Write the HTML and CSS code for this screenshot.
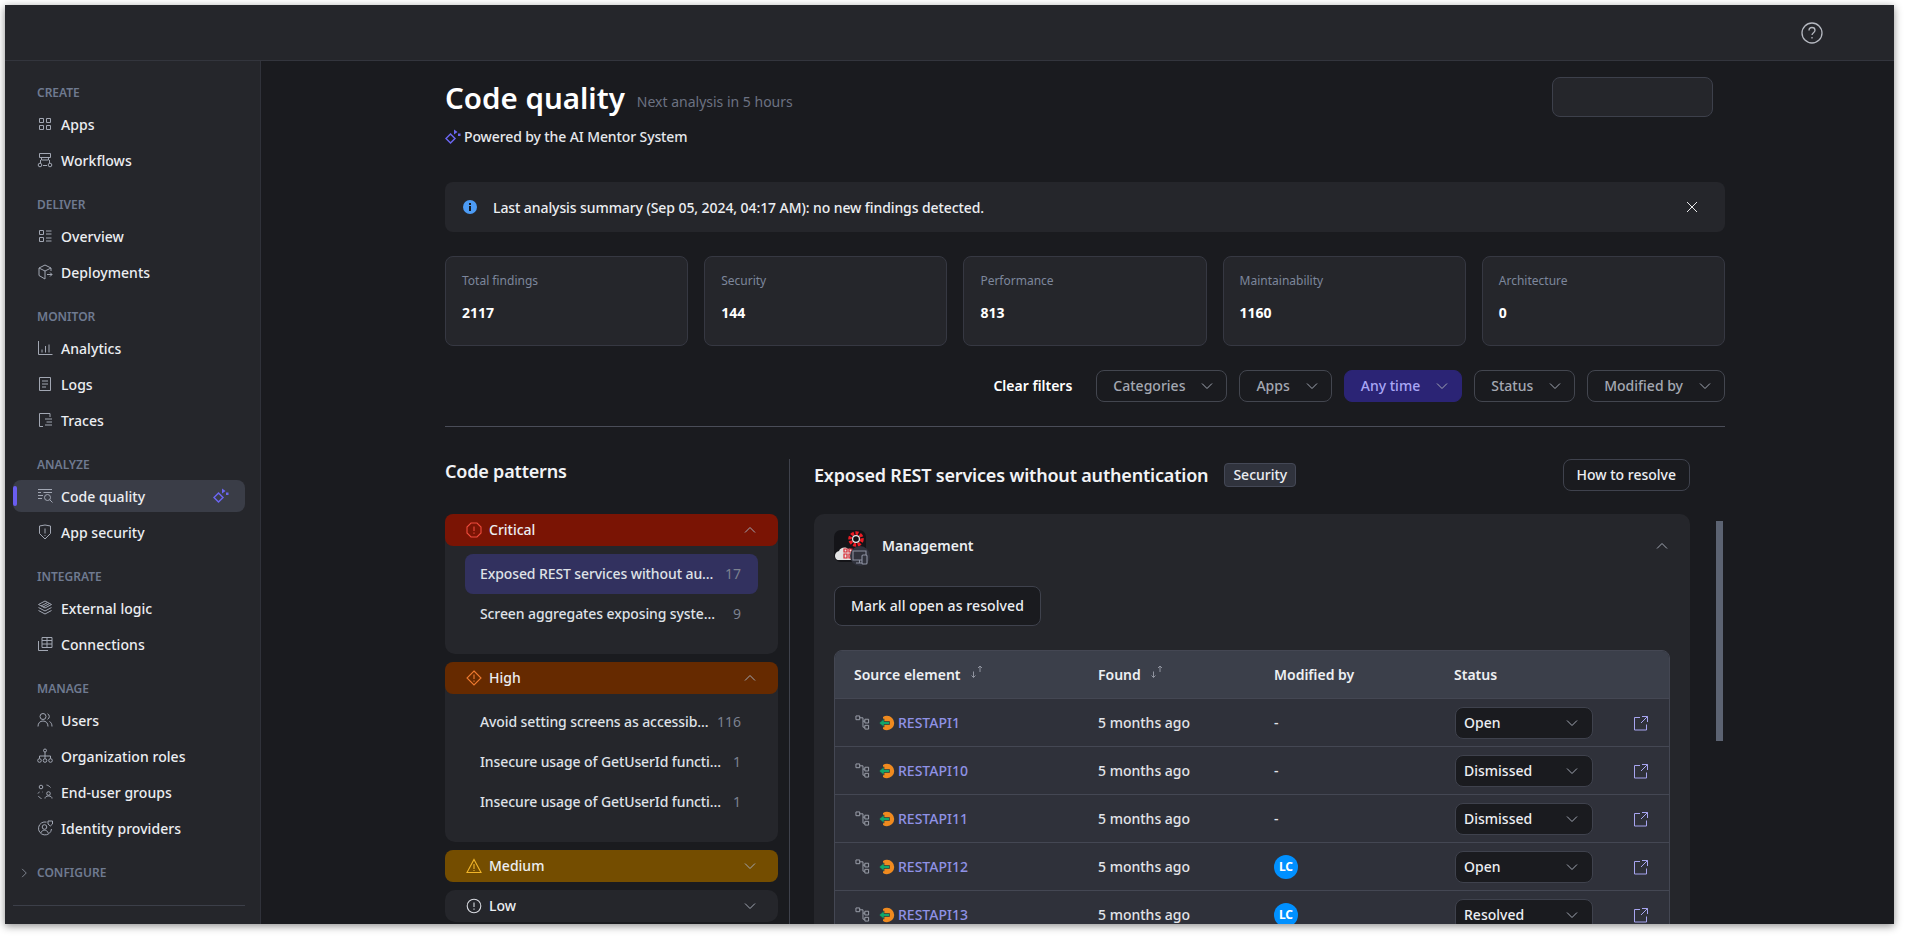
FILE: index.html
```html
<!DOCTYPE html>
<html lang="en">
<head>
  <meta charset="UTF-8" />
  <title>Code quality</title>
  <link rel="stylesheet" href="styles.css">
</head>
<body>
  <svg class="sprites" width="0" height="0">
    <symbol id="i-apps" viewBox="0 0 16 16"><path d="M2.5 2.5h4v4h-4zM9.5 2.5h4v4h-4zM2.5 9.5h4v4h-4zM9.5 9.5h4v4h-4z"/></symbol>
    <symbol id="i-flows" viewBox="0 0 16 16"><path d="M2.5 1.5h11v4h-11zM4.5 5.5V8h7V5.5M3.500 8v3M12.5 8v3M6 13.5h4"/><circle cx="3" cy="13" r="1.8"/><circle cx="13" cy="13" r="1.8"/></symbol>
    <symbol id="i-overview" viewBox="0 0 16 16"><path d="M2.5 2.5h4v4h-4zM2.5 9.5h4v4h-4zM9 3h5.5M9 6h5.5M9 10h5.5M9 13h5.5"/></symbol>
    <symbol id="i-deploy" viewBox="0 0 16 16"><path d="M8 1 2 4v7.5L8 15M8 1l6 3v3M2 4l6 3v8M8 7l6-3M10 10.5h5M13 8.5l2 2-2 2"/></symbol>
    <symbol id="i-analytics" viewBox="0 0 16 16"><path d="M1.5 1v13.5h14M5 9.5v3M8.5 6v6.5M12 4.5v8"/></symbol>
    <symbol id="i-logs" viewBox="0 0 16 16"><path d="M2.5 1.5h11v13h-11zM5 5h6M5 8h6M5 11h4"/></symbol>
    <symbol id="i-traces" viewBox="0 0 16 16"><path d="M13 5V1.5H2.5v13H6M8 7h7M9.5 10H15M8 13h7"/></symbol>
    <symbol id="i-quality" viewBox="0 0 16 16"><path d="M1 1.5h14M1 4.5h3M6.5 4.5H15M1 7.5h5M1 10.5h4"/><circle cx="10.5" cy="9.5" r="3"/><path d="m12.8 11.8 2.7 2.7"/></symbol>
    <symbol id="i-shield" viewBox="0 0 16 16"><path d="M2.5 2 8 1l5.500 1v7.5L8 15 2.5 9.500zM8 4.5v5M8 11v.8"/></symbol>
    <symbol id="i-layers" viewBox="0 0 16 16"><path d="M8 1 1.500 4.500 8 8l6.500-3.500zM1.500 7.500 8 11l6.500-3.500M1.500 10.500 8 14l6.500-3.500M4 6l6-3.200M6 7l6-3.200"/></symbol>
    <symbol id="i-conn" viewBox="0 0 16 16"><path d="M5 1.500h10v10H5zM5 4.500h10M5 8h10M10 1.500v10M1.500 5v9.500H11"/></symbol>
    <symbol id="i-users" viewBox="0 0 16 16"><circle cx="6" cy="4.5" r="3"/><path d="M1 14.500c0-3.500 2-5.500 5-5.500s5 2 5 5.500M10.500 1.800a3 3 0 0 1 0 5.500M12.500 9.500c1.500.8 2.500 2.500 2.500 5"/></symbol>
    <symbol id="i-org" viewBox="0 0 16 16"><circle cx="8" cy="2.5" r="1.5"/><path d="M8 4v4M2.500 10.500V8h11v2.500M8 8v2.500"/><circle cx="2.5" cy="12.5" r="1.8"/><circle cx="8" cy="12.5" r="1.8"/><circle cx="13.5" cy="12.5" r="1.8"/></symbol>
    <symbol id="i-groups" viewBox="0 0 16 16"><circle cx="4" cy="3" r="1.8"/><circle cx="11.5" cy="9.5" r="1.8"/><path d="M8 14.500c0-1.800 1.500-2.500 3.500-2.500s3.500.7 3.500 2.500M1 9.500c.3-.8 1-1.300 1.500-1.500M5.500 8h.5M1.500 12c.5 1.300 1.500 2 3 2.500M9.500 1c1.500.3 3 1.200 4 2.500"/></symbol>
    <symbol id="i-identity" viewBox="0 0 16 16"><path d="M9.500 2.100A6.500 6.500 0 1 0 14.500 9"/><circle cx="7.5" cy="7" r="2.3"/><path d="M3.800 13c.5-1.800 2-2.800 3.700-2.800s3.200 1 3.700 2.800M11 1h4.500v3L13.300 6 11 4z"/></symbol>
    <symbol id="i-down" viewBox="0 0 16 16"><path d="m3 5.500 5 5 5-5"/></symbol>
    <symbol id="i-up" viewBox="0 0 16 16"><path d="m3 10.500 5-5 5 5"/></symbol>
    <symbol id="i-right" viewBox="0 0 16 16"><path d="m5.500 2.500 5.500 5.500-5.500 5.500"/></symbol>
    <symbol id="i-spark" viewBox="0 0 16 16"><path class="spark-line" d="m5.500 5 4.500 4.500L5.500 14 1 9.500z"/><path class="solid" d="M9 .5 12.500 3 9 5.500zM13 4.500h2.500V7H13z"/></symbol>
    <symbol id="i-tree" viewBox="0 0 16 16"><path d="M1 1h4v4H1zM10.500 4.500h4v4h-4zM10.500 11h4v4h-4zM5 3h3.500v10h2M8.500 6.500h2"/></symbol>
    <symbol id="i-open" viewBox="0 0 16 16"><path d="M7 2.500H1.500v12.500h12V9.500M9 1.500h5.500V7M14.500 1.500 8 8"/></symbol>
    <symbol id="i-sort" viewBox="0 0 14 14"><path d="M3.500 6.500v6M1.500 10.500l2 2 2-2M10 1v6M8 3l2-2 2 2"/></symbol>
    <symbol id="i-rest" viewBox="0 0 16 16"><path class="orange" d="M8 .8a7.200 7.200 0 1 1 0 14.400 7 7 0 0 1-4-1.200V2a7 7 0 0 1 4-1.200z"/><path class="green" d="M0 8l5-4.200v2.700h5.500v3H5v2.700z"/></symbol>
  </svg>

  <div class="window">
    <header class="topbar">
      <svg class="help" viewBox="0 0 22 22"><circle cx="11" cy="11" r="10"/><path d="M8 8.500c0-1.800 1.300-3 3-3s3 1.200 3 2.800c0 2.400-3 2.400-3 4.700M11 15v1.500"/></svg>
    </header>

    <div class="layout">
      <aside class="sidebar">
        <div class="nav-group">
          <div class="nav-label">CREATE</div>
          <a class="nav-item"><svg class="ico"><use href="#i-apps"/></svg>Apps</a>
          <a class="nav-item"><svg class="ico"><use href="#i-flows"/></svg>Workflows</a>
        </div>
        <div class="nav-group">
          <div class="nav-label">DELIVER</div>
          <a class="nav-item"><svg class="ico"><use href="#i-overview"/></svg>Overview</a>
          <a class="nav-item"><svg class="ico"><use href="#i-deploy"/></svg>Deployments</a>
        </div>
        <div class="nav-group">
          <div class="nav-label">MONITOR</div>
          <a class="nav-item"><svg class="ico"><use href="#i-analytics"/></svg>Analytics</a>
          <a class="nav-item"><svg class="ico"><use href="#i-logs"/></svg>Logs</a>
          <a class="nav-item"><svg class="ico"><use href="#i-traces"/></svg>Traces</a>
        </div>
        <div class="nav-group">
          <div class="nav-label">ANALYZE</div>
          <a class="nav-item active"><svg class="ico"><use href="#i-quality"/></svg>Code quality<svg class="ico spark nav-spark"><use href="#i-spark"/></svg></a>
          <a class="nav-item"><svg class="ico"><use href="#i-shield"/></svg>App security</a>
        </div>
        <div class="nav-group">
          <div class="nav-label">INTEGRATE</div>
          <a class="nav-item"><svg class="ico"><use href="#i-layers"/></svg>External logic</a>
          <a class="nav-item"><svg class="ico"><use href="#i-conn"/></svg>Connections</a>
        </div>
        <div class="nav-group">
          <div class="nav-label">MANAGE</div>
          <a class="nav-item"><svg class="ico"><use href="#i-users"/></svg>Users</a>
          <a class="nav-item"><svg class="ico"><use href="#i-org"/></svg>Organization roles</a>
          <a class="nav-item"><svg class="ico"><use href="#i-groups"/></svg>End-user groups</a>
          <a class="nav-item"><svg class="ico"><use href="#i-identity"/></svg>Identity providers</a>
        </div>
        <div class="nav-label nav-collapsed"><svg class="chev-sm"><use href="#i-right"/></svg>CONFIGURE</div>
        <div class="nav-rule"></div>
      </aside>

      <main class="main">
        <div class="page-head">
          <div>
            <div class="title-row">
              <h1>Code quality</h1>
              <span class="next-run">Next analysis in 5 hours</span>
            </div>
            <div class="powered"><svg class="ico spark"><use href="#i-spark"/></svg>Powered by the AI Mentor System</div>
          </div>
          <div class="empty-box"></div>
        </div>

        <div class="alert">
          <svg class="alert-ico" viewBox="0 0 14 14"><circle cx="7" cy="7" r="7"/><rect x="6" y="6" width="2" height="5"/><rect x="6" y="3" width="2" height="2"/></svg>
          <span class="alert-text">Last analysis summary (Sep 05, 2024, 04:17 AM): no new findings detected.</span>
          <svg class="alert-close" viewBox="0 0 12 12"><path d="m1 1 10 10M11 1 1 11"/></svg>
        </div>

        <div class="stats">
          <div class="stat"><div class="stat-label">Total findings</div><div class="stat-value">2117</div></div>
          <div class="stat"><div class="stat-label">Security</div><div class="stat-value">144</div></div>
          <div class="stat"><div class="stat-label">Performance</div><div class="stat-value">813</div></div>
          <div class="stat"><div class="stat-label">Maintainability</div><div class="stat-value">1160</div></div>
          <div class="stat"><div class="stat-label">Architecture</div><div class="stat-value">0</div></div>
        </div>

        <div class="filters">
          <a class="clear">Clear filters</a>
          <button class="filter">Categories<svg class="chev"><use href="#i-down"/></svg></button>
          <button class="filter">Apps<svg class="chev"><use href="#i-down"/></svg></button>
          <button class="filter on">Any time<svg class="chev"><use href="#i-down"/></svg></button>
          <button class="filter">Status<svg class="chev"><use href="#i-down"/></svg></button>
          <button class="filter">Modified by<svg class="chev"><use href="#i-down"/></svg></button>
        </div>

        <div class="split">
          <section class="patterns">
            <h2>Code patterns</h2>

            <div class="sev">
              <div class="sev-head critical">
                <svg class="sev-ico" viewBox="0 0 16 16"><path d="M5 1h6l4 4v6l-4 4H5l-4-4V5zM8 4.500v4.500M8 10.500v1.200"/></svg>
                <span>Critical</span><svg class="chev"><use href="#i-up"/></svg>
              </div>
              <div class="sev-body">
                <div class="pat selected"><span class="pat-name">Exposed REST services without au...</span><span class="pat-count">17</span></div>
                <div class="pat"><span class="pat-name">Screen aggregates exposing syste...</span><span class="pat-count">9</span></div>
              </div>
            </div>

            <div class="sev">
              <div class="sev-head high">
                <svg class="sev-ico" viewBox="0 0 16 16"><path d="M8 1l7 7-7 7-7-7zM8 4.500v4.500M8 10.500v1.200"/></svg>
                <span>High</span><svg class="chev"><use href="#i-up"/></svg>
              </div>
              <div class="sev-body">
                <div class="pat"><span class="pat-name">Avoid setting screens as accessib...</span><span class="pat-count">116</span></div>
                <div class="pat"><span class="pat-name">Insecure usage of GetUserId functi...</span><span class="pat-count">1</span></div>
                <div class="pat"><span class="pat-name">Insecure usage of GetUserId functi...</span><span class="pat-count">1</span></div>
              </div>
            </div>

            <div class="sev">
              <div class="sev-head medium">
                <svg class="sev-ico" viewBox="0 0 16 16"><path d="M8 1.500 15 14.500H1zM8 6v5M8 12v1"/></svg>
                <span>Medium</span><svg class="chev"><use href="#i-down"/></svg>
              </div>
            </div>

            <div class="sev">
              <div class="sev-head low">
                <svg class="sev-ico" viewBox="0 0 16 16"><circle cx="8" cy="8" r="6.8"/><path d="M8 4.500v4.500M8 10.500v1.200"/></svg>
                <span>Low</span><svg class="chev"><use href="#i-down"/></svg>
              </div>
            </div>
          </section>

          <section class="detail">
            <div class="detail-head">
              <h2>Exposed REST services without authentication</h2>
              <span class="tag">Security</span>
              <button class="resolve">How to resolve</button>
            </div>

            <div class="app-card">
              <div class="app-head">
                <svg class="app-ico" viewBox="0 0 36 36">
                  <rect x="0" y="0" width="32" height="32" rx="7" fill="#141418"/>
                  <path d="M2 29c-2-3-1-7 3-8 1-3 6-5 9-2 3-1 6 1 6 4v7H6c-2 0-3 0-4-1z" fill="#e4e4e4"/>
                  <path d="M10 19h3v3h-3zM15 19h3v3h-3zM10 24h3v4h-3zM15 24h3v4h-3z" fill="none" stroke="#d9232e" stroke-width="1.2"/>
                  <circle cx="22" cy="9" r="6" fill="#101012" stroke="#ed1c24" stroke-width="3.5" stroke-dasharray="3 1.5"/>
                  <circle cx="22" cy="9" r="3.4" fill="#101012" stroke="#e8e8e8" stroke-width="1.2"/>
                  <circle cx="26" cy="26" r="10" fill="#30323c"/>
                  <path d="M19 21h13v9h-13zM25.500 30v3M22 33h7" fill="none" stroke="#8b90a0" stroke-width="1.1"/>
                  <rect x="28" y="25" width="5" height="9" rx="1" fill="#30323c" stroke="#8b90a0" stroke-width="1.1"/>
                </svg>
                <span class="app-name">Management</span>
                <svg class="chev"><use href="#i-up"/></svg>
              </div>

              <button class="mark-all">Mark all open as resolved</button>

              <table class="findings">
                <thead>
                  <tr>
                    <th class="c-src">Source element<svg class="sort"><use href="#i-sort"/></svg></th>
                    <th class="c-found">Found<svg class="sort"><use href="#i-sort"/></svg></th>
                    <th class="c-mod">Modified by</th>
                    <th class="c-status">Status</th>
                    <th></th>
                  </tr>
                </thead>
                <tbody>
                  <tr>
                    <td><div class="src"><svg class="ico tree"><use href="#i-tree"/></svg><svg class="rest"><use href="#i-rest"/></svg><a>RESTAPI1</a></div></td>
                    <td>5 months ago</td>
                    <td>-</td>
                    <td><div class="select">Open<svg class="chev"><use href="#i-down"/></svg></div></td>
                    <td><svg class="ico open"><use href="#i-open"/></svg></td>
                  </tr>
                  <tr>
                    <td><div class="src"><svg class="ico tree"><use href="#i-tree"/></svg><svg class="rest"><use href="#i-rest"/></svg><a>RESTAPI10</a></div></td>
                    <td>5 months ago</td>
                    <td>-</td>
                    <td><div class="select">Dismissed<svg class="chev"><use href="#i-down"/></svg></div></td>
                    <td><svg class="ico open"><use href="#i-open"/></svg></td>
                  </tr>
                  <tr>
                    <td><div class="src"><svg class="ico tree"><use href="#i-tree"/></svg><svg class="rest"><use href="#i-rest"/></svg><a>RESTAPI11</a></div></td>
                    <td>5 months ago</td>
                    <td>-</td>
                    <td><div class="select">Dismissed<svg class="chev"><use href="#i-down"/></svg></div></td>
                    <td><svg class="ico open"><use href="#i-open"/></svg></td>
                  </tr>
                  <tr>
                    <td><div class="src"><svg class="ico tree"><use href="#i-tree"/></svg><svg class="rest"><use href="#i-rest"/></svg><a>RESTAPI12</a></div></td>
                    <td>5 months ago</td>
                    <td><span class="avatar">LC</span></td>
                    <td><div class="select">Open<svg class="chev"><use href="#i-down"/></svg></div></td>
                    <td><svg class="ico open"><use href="#i-open"/></svg></td>
                  </tr>
                  <tr>
                    <td><div class="src"><svg class="ico tree"><use href="#i-tree"/></svg><svg class="rest"><use href="#i-rest"/></svg><a>RESTAPI13</a></div></td>
                    <td>5 months ago</td>
                    <td><span class="avatar">LC</span></td>
                    <td><div class="select">Resolved<svg class="chev"><use href="#i-down"/></svg></div></td>
                    <td><svg class="ico open"><use href="#i-open"/></svg></td>
                  </tr>
                </tbody>
              </table>
            </div>
          </section>

          <div class="scrollbar"></div>
        </div>
      </main>
    </div>
  </div>
</body>
</html>
```

FILE: styles.css
```css
:root {
  --bg: #1a1b1f;
  --panel: #25262b;
  --border: #363842;
  --line: #444753;
  --text: #eceef2;
  --muted: #7c8496;
  --accent: #8f92e6;
}
* { box-sizing: border-box; margin: 0; padding: 0; }
html, body { height: 100%; overflow: hidden; }
body {
  background: #fff;
  padding: 5px;
  font-family: "Noto Sans", sans-serif;
  font-size: 14px;
  font-weight: 500;
  color: var(--text);
}
.sprites { display: block; height: 0; }
svg { fill: none; stroke: currentColor; stroke-width: 1; flex: none; }
svg .solid { fill: currentColor; stroke: none; }
svg .spark-line { stroke-width: 1.5; }
svg .orange { fill: #ef8a1f; stroke: none; }
svg .green { fill: #12a66a; stroke: #2f313a; stroke-width: .7; }

.window {
  width: 1889px;
  height: 919px;
  background: var(--bg);
  box-shadow: 0 2px 8px rgba(0,0,0,0.45);
  overflow: hidden;
  display: flex;
  flex-direction: column;
}

.topbar {
  height: 56px;
  flex: none;
  background: var(--panel);
  border-bottom: 1px solid #33353d;
  display: flex;
  align-items: center;
  justify-content: flex-end;
  padding-right: 71px;
}
.help { width: 22px; height: 22px; color: #b5b8c0; stroke-width: 1.3; }

.layout { flex: 1; display: flex; min-height: 0; }

/* Sidebar */
.sidebar {
  width: 256px;
  flex: none;
  background: var(--panel);
  border-right: 1px solid #30323a;
  padding: 24px 15px 0 8px;
}
.nav-group { margin-bottom: 21px; display: flex; flex-direction: column; gap: 4px; }
.nav-label {
  font-size: 12px;
  line-height: 16px;
  font-weight: 600;
  color: #6f7a90;
  padding-left: 24px;
  margin-bottom: 3px;
}
.nav-item {
  height: 32px;
  display: flex;
  align-items: center;
  gap: 8px;
  padding-left: 24px;
  border-radius: 8px;
  letter-spacing: .05px;
  position: relative;
}
.ico { width: 16px; height: 16px; color: #a2a7b3; }
.nav-item.active { background: #3a3d47; }
.nav-item.active::before {
  content: "";
  position: absolute;
  left: 0; top: 6px; bottom: 6px;
  width: 4px;
  border-radius: 2px;
  background: #6a5df0;
}
.spark { color: #6b66f0; }
.nav-spark { margin-left: auto; margin-right: 16px; }
.nav-collapsed { display: flex; align-items: center; margin: 0; }
.chev-sm { width: 16px; height: 12px; color: #9aa0ad; margin-left: -21px; margin-right: 5px; }
.nav-rule { height: 1px; background: #3c3f49; margin-top: 24px; }

/* Main */
.main { flex: 1; min-width: 0; padding: 19px 0 0 184px; }
.main > * { width: 1280px; }

.page-head { display: flex; justify-content: space-between; align-items: flex-start; padding-right: 12px; }
.title-row { display: flex; align-items: flex-end; gap: 12px; height: 36px; }
h1 { font-size: 29.5px; line-height: 36px; font-weight: 600; color: #fff; }
.next-run { font-size: 14px; line-height: 20px; padding-bottom: 4px; font-weight: 400; color: #6c7282; }
.powered { display: flex; align-items: center; gap: 3px; margin-top: 11px; line-height: 20px; color: #e6e8ec; letter-spacing: -.11px; }
.empty-box {
  width: 161px;
  height: 40px;
  margin-top: -3px;
  background: var(--panel);
  border: 1px solid #3d404b;
  border-radius: 8px;
}

.alert {
  height: 50px;
  margin-top: 35px;
  background: var(--panel);
  border-radius: 8px;
  display: flex;
  align-items: center;
  padding: 0 27px 0 18px;
}
.alert-ico { width: 14px; height: 14px; margin-right: 16px; stroke: none; }
.alert-ico circle { fill: #4c9bf5; }
.alert-ico rect { fill: #1a1b1f; }
.alert-text { flex: 1; letter-spacing: -.085px; }
.alert-close { width: 12px; height: 12px; color: #e8e8ea; }

.stats { display: grid; grid-template-columns: repeat(5, 1fr); gap: 16px; margin-top: 24px; }
.stat {
  height: 90px;
  background: var(--panel);
  border: 1px solid var(--border);
  border-radius: 8px;
  padding: 15px 16px;
}
.stat-label { font-size: 12px; line-height: 18px; font-weight: 400; color: #7d879c; }
.stat-value { margin-top: 13px; line-height: 20px; font-weight: 700; color: #fff; }

.filters {
  display: flex;
  justify-content: flex-end;
  align-items: flex-start;
  gap: 12px;
  margin-top: 24px;
  height: 57px;
  border-bottom: 1px solid #4a4d58;
}
.clear { font-weight: 600; line-height: 32px; color: #fff; margin-right: 12px; }
.filter {
  height: 32px;
  padding: 0 11px 1px 16px;
  display: flex;
  align-items: center;
  gap: 14px;
  font: inherit;
  color: #a4a8b2;
  background: transparent;
  border: 1px solid #43464f;
  border-radius: 8px;
}
.filter.on { background: #2b2475; border-color: #2b2475; color: #a9a7f5; }
.chev { width: 16px; height: 16px; color: #a2a7b3; }

.split { display: flex; margin-top: 32px; height: 500px; }
h2 { font-size: 18px; line-height: 26px; font-weight: 600; color: #f2f3f6; letter-spacing: -.19px; }

/* Code patterns */
.patterns {
  width: 345px;
  flex: none;
  padding-right: 11px;
  border-right: 1px solid #3f424c;
}
.patterns h2 { line-height: 24px; margin-bottom: 31px; }
.sev { margin-bottom: 8px; background: var(--panel); border-radius: 10px; }
.sev-head {
  height: 32px;
  display: flex;
  align-items: center;
  gap: 7px;
  padding: 0 20px 0 21px;
  border-radius: 8px;
}
.sev-head span { flex: 1; padding-bottom: 2px; }
.sev-ico { width: 16px; height: 16px; stroke-width: 1.1; }
.critical { background: #7a1404; }
.critical .sev-ico { color: #ef4b3c; }
.high { background: #662a00; }
.high .sev-ico { color: #ef7a30; }
.medium { background: #744d00; }
.medium .sev-ico { color: #f0b429; }
.low .sev-ico { color: #d8dae0; }
.sev-body { padding: 8px 20px 20px; }
.pat {
  height: 40px;
  display: flex;
  align-items: center;
  justify-content: space-between;
  padding: 0 17px 2px 15px;
  border-radius: 8px;
  color: #dfe1e7;
  white-space: nowrap;
}
.pat.selected { background: #32315f; }
.pat-name { letter-spacing: -.1px; }
.pat-count { font-weight: 400; color: #7c8190; }

/* Detail pane */
.detail { width: 900px; flex: none; padding-left: 24px; }
.detail-head { height: 31px; display: flex; align-items: center; margin-bottom: 24px; }
.tag {
  margin-left: 16px;
  height: 24px;
  line-height: 22px;
  padding: 0 8px;
  background: #30333d;
  border: 1px solid #444856;
  border-radius: 4px;
}
.resolve, .mark-all {
  font: inherit;
  color: var(--text);
  background: var(--bg);
  border: 1px solid #3f424d;
  border-radius: 8px;
}
.resolve { margin-left: auto; height: 32px; padding: 0 13px; }
.app-card {
  height: 420px;
  background: var(--panel);
  border-radius: 10px;
  padding: 16px 20px 0;
}
.app-head { display: flex; align-items: center; height: 32px; }
.app-ico { width: 36px; height: 36px; stroke: none; align-self: flex-start; }
.app-name { margin-left: 12px; flex: 1; font-weight: 600; padding-bottom: 2px; }
.mark-all { display: block; margin-top: 24px; height: 40px; padding: 0 16px 2px; letter-spacing: .1px; }

.findings {
  width: 836px;
  margin-top: 24px;
  border-collapse: separate;
  border-spacing: 0;
  table-layout: fixed;
  background: #2f313a;
  border: 1px solid var(--line);
  border-radius: 8px 8px 0 0;
  overflow: hidden;
}
.findings th {
  height: 48px;
  background: #3b3f4a;
  text-align: left;
  font-weight: 600;
  color: #eef0f3;
  border-bottom: 1px solid var(--line);
}
.c-src { width: 263px; padding-left: 19px !important; }
.c-found { width: 176px; }
.c-mod { width: 180px; }
.c-status { width: 179px; }
.sort { width: 14px; height: 14px; margin-left: 9px; color: #8f939e; vertical-align: 1px; }
.findings td {
  height: 48px;
  border-bottom: 1px solid var(--line);
  color: #e2e4e9;
}
.findings td:first-child { padding-left: 19px; }
.src { display: flex; align-items: center; gap: 7px; }
.src a { color: var(--accent); }
.tree { width: 15px; height: 15px; color: #a0a4af; margin-left: 1px; margin-right: 2px; }
.rest { width: 16px; height: 16px; margin-right: -4px; }
.avatar {
  display: flex;
  align-items: center;
  justify-content: center;
  width: 24px;
  height: 24px;
  border-radius: 50%;
  background: #0090ff;
  color: #fff;
  font-size: 12px;
  font-weight: 700;
}
.select {
  width: 138px;
  height: 32px;
  margin-left: 1px;
  display: flex;
  align-items: center;
  justify-content: space-between;
  padding: 0 12px 0 8px;
  background: var(--bg);
  border: 1px solid #3f424d;
  border-radius: 8px;
  color: #eceef2;
}
.open { color: #a7a5f0; display: block; }

.scrollbar {
  width: 7px;
  height: 220px;
  flex: none;
  margin: 62px 0 0 26px;
  background: #5c6372;
}
```
